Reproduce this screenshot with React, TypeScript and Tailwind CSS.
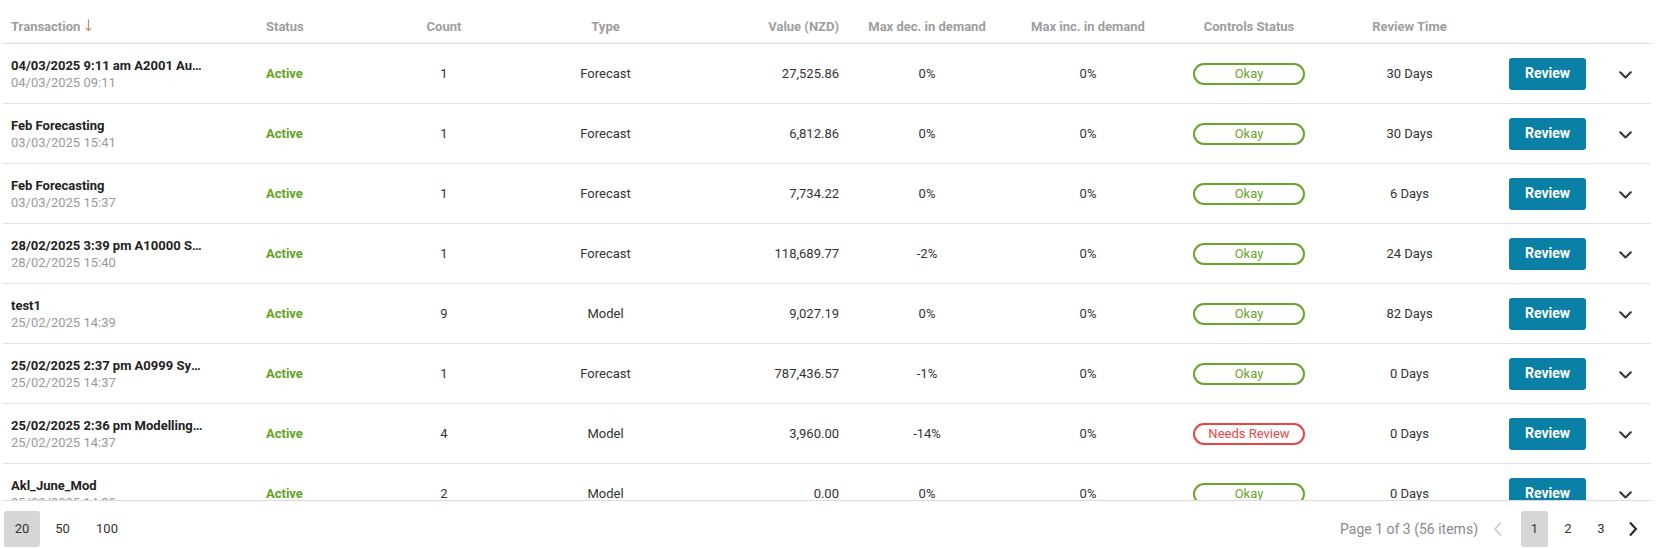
import React from "react";

type Row = {
  title: string;
  date: string;
  count: number;
  type: string;
  value: string;
  dec: string;
  inc: string;
  ok: boolean;
  review: string;
};

const rows: Row[] = [
  { title: "04/03/2025 9:11 am A2001 Auckland Forecast", date: "04/03/2025 09:11", count: 1, type: "Forecast", value: "27,525.86", dec: "0%", inc: "0%", ok: true, review: "30 Days" },
  { title: "Feb Forecasting", date: "03/03/2025 15:41", count: 1, type: "Forecast", value: "6,812.86", dec: "0%", inc: "0%", ok: true, review: "30 Days" },
  { title: "Feb Forecasting", date: "03/03/2025 15:37", count: 1, type: "Forecast", value: "7,734.22", dec: "0%", inc: "0%", ok: true, review: "6 Days" },
  { title: "28/02/2025 3:39 pm A10000 Summary Forecast", date: "28/02/2025 15:40", count: 1, type: "Forecast", value: "118,689.77", dec: "-2%", inc: "0%", ok: true, review: "24 Days" },
  { title: "test1", date: "25/02/2025 14:39", count: 9, type: "Model", value: "9,027.19", dec: "0%", inc: "0%", ok: true, review: "82 Days" },
  { title: "25/02/2025 2:37 pm A0999 System Forecast", date: "25/02/2025 14:37", count: 1, type: "Forecast", value: "787,436.57", dec: "-1%", inc: "0%", ok: true, review: "0 Days" },
  { title: "25/02/2025 2:36 pm Modelling Forecast", date: "25/02/2025 14:37", count: 4, type: "Model", value: "3,960.00", dec: "-14%", inc: "0%", ok: false, review: "0 Days" },
  { title: "Akl_June_Mod", date: "25/02/2025 14:30", count: 2, type: "Model", value: "0.00", dec: "0%", inc: "0%", ok: true, review: "0 Days" },
];

const Chevron = () => (
  <svg width="13" height="8" viewBox="0 0 13 8" fill="none">
    <path d="M1.2 1.2 L6.5 6.5 L11.8 1.2" stroke="#333" strokeWidth="2" strokeLinecap="round" strokeLinejoin="round" />
  </svg>
);

const Header = () => (
  <div className="flex h-[44px] items-center pt-[10px] border-b border-[#dcdcdc] text-[13px] font-bold text-[#9e9e9e]">
    <div className="w-[255px] pl-[8px] flex items-center gap-[5px]">
      <span>Transaction</span>
      <svg width="7" height="13" viewBox="0 0 7 13" fill="none" className="-mt-[3px]">
        <path d="M3.5 0.5 V11.5 M1 9 L3.5 11.5 L6 9" stroke="#b98f78" strokeWidth="1.2" />
      </svg>
    </div>
    <div className="w-[92px] pl-[8px]">Status</div>
    <div className="w-[188px] text-center">Count</div>
    <div className="w-[135px] text-center">Type</div>
    <div className="w-[174px] text-right pr-[8px]">Value (NZD)</div>
    <div className="w-[160px] text-center">Max dec. in demand</div>
    <div className="w-[162px] text-center">Max inc. in demand</div>
    <div className="w-[160px] text-center">Controls Status</div>
    <div className="w-[161px] text-center">Review Time</div>
    <div className="w-[110px]" />
    <div className="w-[51px]" />
  </div>
);

const TableRow = ({ r }: { r: Row }) => (
  <div className="flex h-[60px] items-center border-b border-[#e2e2e2] text-[13px] text-[#333]">
    <div className="w-[255px] pl-[8px] leading-[17px]">
      <div className="w-[192px] truncate font-bold text-[#222]">{r.title}</div>
      <div className="text-[#9a9a9a]">{r.date}</div>
    </div>
    <div className="w-[92px] pl-[8px] font-bold text-[#5fa323]">Active</div>
    <div className="w-[188px] text-center">{r.count}</div>
    <div className="w-[135px] text-center">{r.type}</div>
    <div className="w-[174px] text-right pr-[8px]">{r.value}</div>
    <div className="w-[160px] text-center">{r.dec}</div>
    <div className="w-[162px] text-center">{r.inc}</div>
    <div className="w-[160px] flex justify-center">
      {r.ok ? (
        <span className="w-[112px] h-[22px] rounded-full border-2 border-[#6aa52b] text-[#6aa52b] flex items-center justify-center">Okay</span>
      ) : (
        <span className="w-[112px] h-[22px] rounded-full border-2 border-[#e84646] text-[#e84646] flex items-center justify-center">Needs Review</span>
      )}
    </div>
    <div className="w-[161px] text-center">{r.review}</div>
    <div className="w-[110px] pl-[19px]">
      <button className="w-[77px] h-[32px] rounded-[3px] bg-[#0b80a6] text-white font-bold text-[14px]">Review</button>
    </div>
    <div className="w-[51px] flex justify-center pt-[2px]">
      <Chevron />
    </div>
  </div>
);

export default function App() {
  return (
    <div className="w-[1658px] h-[548px] bg-white overflow-hidden" style={{ fontFamily: "Roboto, 'Liberation Sans', sans-serif" }}>
      <div className="ml-[3px] w-[1648px]">
        <div className="h-[500px] overflow-hidden">
          <Header />
          {rows.map((r, i) => (
            <TableRow key={i} r={r} />
          ))}
        </div>
        <div className="h-[48px] border-t border-[#dcdcdc] flex items-start pt-[10px] text-[13px] text-[#333]">
          <div className="flex items-center">
            <span className="w-[36px] h-[36px] rounded-[3px] bg-[#d6d6d6] flex items-center justify-center ml-[1px]">20</span>
            <span className="w-[45px] h-[36px] flex items-center justify-center">50</span>
            <span className="w-[44px] h-[36px] flex items-center justify-center">100</span>
          </div>
          <div className="ml-auto flex items-center">
            <span className="text-[#8a8a8a] text-[14px] mr-[6px]">Page 1 of 3 (56 items)</span>
            <span className="w-[28px] h-[36px] flex items-center justify-center mr-[9px]">
              <svg width="10" height="16" viewBox="0 0 10 16" fill="none">
                <path d="M8 1.5 L2 8 L8 14.5" stroke="#c8c8c8" strokeWidth="1.6" />
              </svg>
            </span>
            <span className="w-[27px] h-[36px] rounded-[3px] bg-[#d6d6d6] flex items-center justify-center">1</span>
            <span className="w-[40px] h-[36px] flex items-center justify-center">2</span>
            <span className="w-[26px] h-[36px] flex items-center justify-center">3</span>
            <span className="w-[37px] h-[36px] flex items-center justify-center">
              <svg width="10" height="16" viewBox="0 0 10 16" fill="none">
                <path d="M2 1.5 L8 8 L2 14.5" stroke="#222" strokeWidth="2" />
              </svg>
            </span>
          </div>
        </div>
      </div>
    </div>
  );
}
